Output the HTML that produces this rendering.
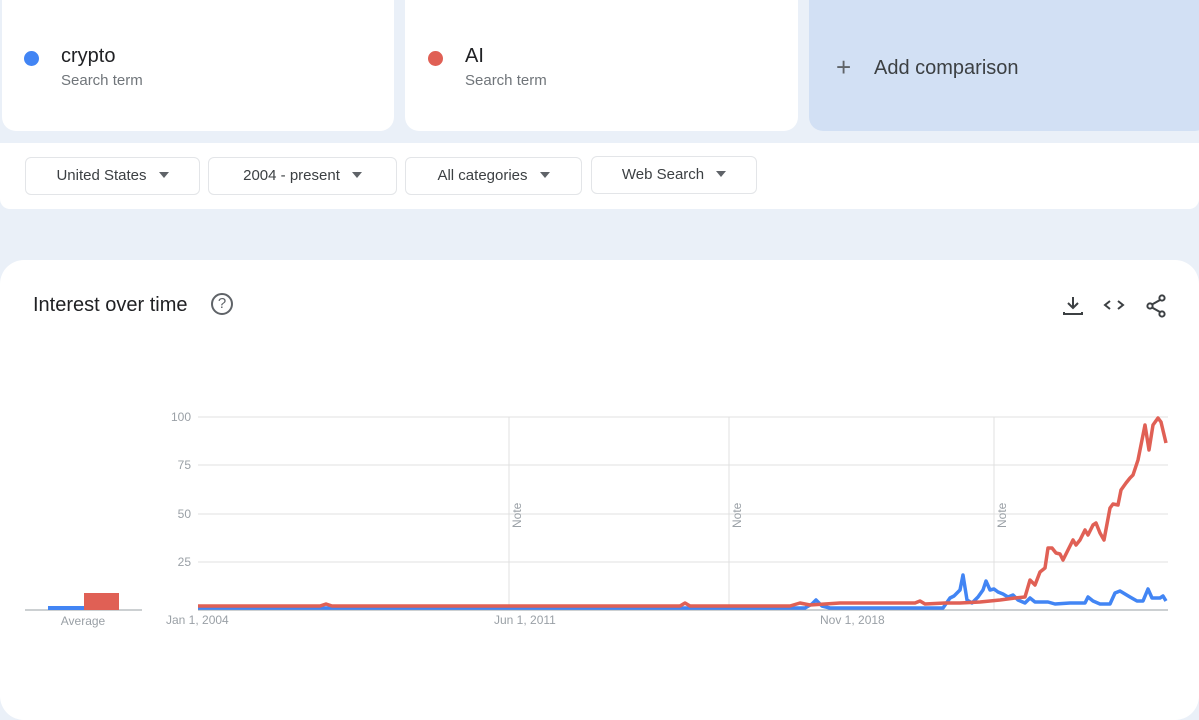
<!DOCTYPE html>
<html><head><meta charset="utf-8"><style>
body{margin:0;width:1199px;height:699px;background:#eaf0f8;font-family:"Liberation Sans",sans-serif;position:relative;overflow:hidden}
.card{position:absolute;background:#fff;border-radius:14px}
.dot{position:absolute;width:15px;height:15px;border-radius:50%}
.term{position:absolute;font-size:20px;color:#202124}
.sub{position:absolute;font-size:15px;color:#70757a}
.btn{position:absolute;top:157px;height:36px;border:1px solid #e3e5e8;border-radius:6px;background:#fff;font-size:15px;color:#3c4043;line-height:36px;text-align:center}
.btn:after{content:"";display:inline-block;margin-left:12px;border-left:5px solid transparent;border-right:5px solid transparent;border-top:6px solid #5f6368;vertical-align:2px}
</style></head><body>
<div class="card" style="left:2px;top:-14px;width:392px;height:145px"></div>
<div class="dot" style="left:24px;top:51px;background:#4285f4"></div>
<div class="term" style="left:61px;top:45px">crypto</div>
<div class="sub" style="left:61px;top:72px">Search term</div>
<div class="card" style="left:405px;top:-14px;width:393px;height:145px"></div>
<div class="dot" style="left:428px;top:51px;background:#e06055"></div>
<div class="term" style="left:465px;top:45px">AI</div>
<div class="sub" style="left:465px;top:72px">Search term</div>
<div class="card" style="left:809px;top:-14px;width:400px;height:145px;background:#d2e0f4"></div>
<div style="position:absolute;left:836px;top:53px;font-size:26px;color:#5f6368;line-height:28px">+</div>
<div style="position:absolute;left:874px;top:57px;font-size:20px;color:#3c4043">Add comparison</div>
<div style="position:absolute;left:0;top:143px;width:1199px;height:66px;background:#fff;border-radius:0 0 10px 10px"></div>
<div class="btn" style="left:25px;width:173px">United States</div>
<div class="btn" style="left:208px;width:187px">2004 - present</div>
<div class="btn" style="left:405px;width:175px">All categories</div>
<div class="btn" style="left:591px;width:164px;top:156px">Web Search</div>
<div class="card" style="left:0;top:260px;width:1199px;height:460px;border-radius:24px"></div>
<div style="position:absolute;left:33px;top:294px;font-size:20px;color:#202124">Interest over time</div>
<div style="position:absolute;left:211px;top:293px;width:18px;height:18px;border:2px solid #5f6368;border-radius:50%;font-size:15px;line-height:18px;text-align:center;color:#5f6368">?</div>
<svg style="position:absolute;left:0;top:0" width="1199" height="699">
<g stroke="#3c4043" stroke-width="2" fill="none">
<path d="M1073 297v11M1068 303l5 5 5-5M1064 312v2h18v-2"/>
<path d="M1110 301l-5 4 5 4M1118 301l5 4-5 4"/>
<path d="M1160 300l-8 4.5M1152 307.5l8 4.5"/>
<circle cx="1162" cy="298" r="2.6"/><circle cx="1150" cy="306" r="2.6"/><circle cx="1162" cy="314" r="2.6"/>
</g>
<g stroke="#e0e0e0" stroke-width="1">
<line x1="198" y1="417" x2="1168" y2="417"/><line x1="198" y1="465" x2="1168" y2="465"/><line x1="198" y1="514" x2="1168" y2="514"/><line x1="198" y1="562" x2="1168" y2="562"/>
<line x1="509" y1="417" x2="509" y2="610"/><line x1="729" y1="417" x2="729" y2="610"/><line x1="994" y1="417" x2="994" y2="610"/>
</g>
<line x1="198" y1="610" x2="1168" y2="610" stroke="#9aa0a6"/>
<line x1="25" y1="610" x2="142" y2="610" stroke="#9aa0a6"/>
<rect x="48" y="606" width="36" height="4" fill="#4285f4"/>
<rect x="84" y="593" width="35" height="17" fill="#e06055"/>
<path fill="none" stroke="#4285f4" stroke-width="3.5" stroke-linejoin="round" d="M198 608L805 608L812 604L816 600L822 606L830 608L943 608L950 598L954 596L960 590L963 575L967 600L972 603L978 597L983 590L986 581L990 590L994 589L998 592L1003 594L1008 597L1013 595L1018 600L1025 603L1030 598L1035 602L1048 602L1055 604L1070 603L1085 603L1088 597L1093 601L1100 604L1110 604L1115 593L1120 591L1130 597L1137 601L1143 601L1148 589L1152 598L1160 598L1163 596L1166 601"/>
<path fill="none" stroke="#e06055" stroke-width="3.5" stroke-linejoin="round" d="M198 606L320 606L326 604L332 606L680 606L685 603L690 606L790 606L800 603L810 605L840 603L915 603L920 601L925 604L945 603L960 603L980 602L1000 600L1015 598L1025 597L1030 580L1035 585L1040 572L1045 568L1048 548L1052 548L1056 553L1060 554L1063 560L1068 550L1073 540L1076 545L1080 540L1085 530L1088 535L1093 525L1096 523L1100 533L1104 540L1110 508L1113 504L1118 505L1121 490L1126 483L1130 478L1133 475L1138 460L1145 425L1149 450L1153 425L1158 418L1161 422L1166 443"/>
<g font-family="Liberation Sans, sans-serif" font-size="12" fill="#9aa0a6">
<text x="191" y="421" text-anchor="end">100</text><text x="191" y="469" text-anchor="end">75</text><text x="191" y="518" text-anchor="end">50</text><text x="191" y="566" text-anchor="end">25</text>
<text x="83" y="625" text-anchor="middle">Average</text>
<text x="166" y="624">Jan 1, 2004</text><text x="494" y="624">Jun 1, 2011</text><text x="820" y="624">Nov 1, 2018</text>
<text transform="translate(521,528) rotate(-90)">Note</text>
<text transform="translate(741,528) rotate(-90)">Note</text>
<text transform="translate(1006,528) rotate(-90)">Note</text>
</g>
</svg>
</body></html>
